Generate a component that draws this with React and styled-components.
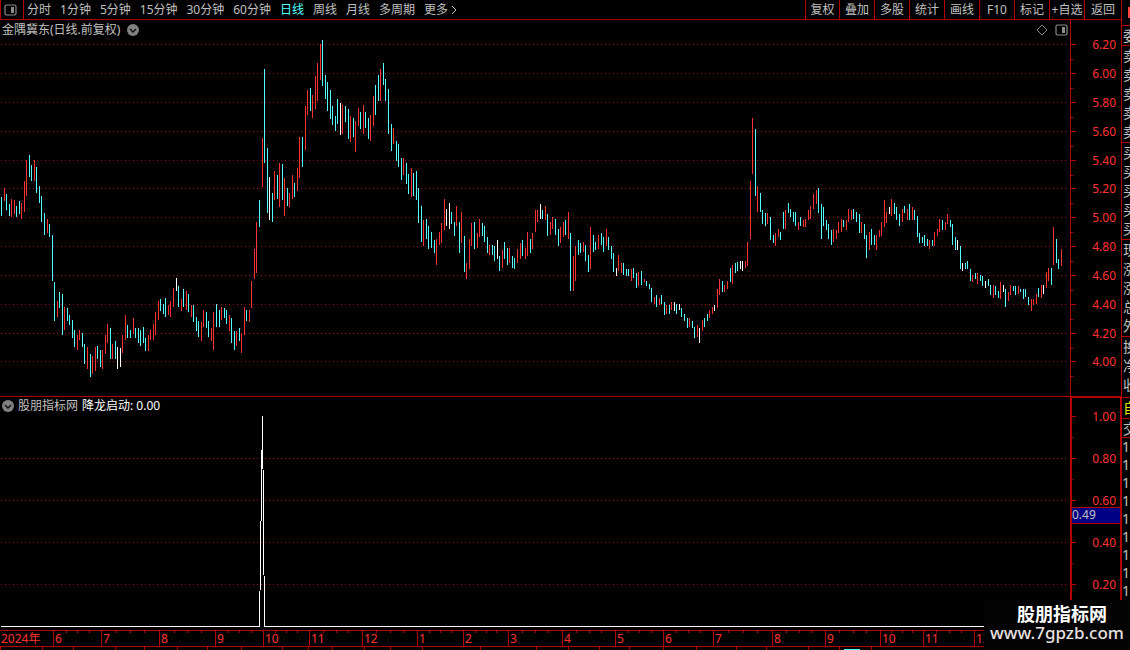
import React, { useState } from "react";
import styled, { createGlobalStyle } from "styled-components";

const periods = [
  "分时",
  "1分钟",
  "5分钟",
  "15分钟",
  "30分钟",
  "60分钟",
  "日线",
  "周线",
  "月线",
  "多周期",
];

const tools = ["复权", "叠加", "多股", "统计", "画线", "F10", "标记", "+自选", "返回"];

// x, high, low for every day, grouped by colour: r = up, c = down, w = flat
const bars = `
c1,197,216 r4,188,201 c6,194,210 c9,204,216 r11,199,217 r14,200,214 c16,206,217 c19,201,214 r21,203,219
r24,181,212 r26,160,196 c29,155,177 c31,165,181 r34,160,181 c36,167,193 c39,186,203 c41,196,222 c44,213,235
r47,219,233 c49,224,237 c52,235,281 c54,282,321 r57,301,317 c59,292,308 c62,294,335 r64,307,330 c67,308,321
c69,315,325 c72,320,338 c74,330,347 r77,335,350 r79,330,340 c82,333,347 c84,344,364 r87,347,369 c90,354,377
r92,356,374 r95,347,371 c97,346,359 c100,350,367 r102,350,369 r105,335,354 r107,324,343 c110,328,359
r112,344,359 c115,341,359 w117,347,369 w120,348,367 r122,335,353 r125,315,340 c127,325,338 c130,330,338
r133,318,334 c135,328,338 c138,328,343 c140,330,346 c143,327,343 c145,338,351 r148,335,351 r150,330,340
r153,324,340 r155,312,335 r158,301,320 c160,299,311 c163,304,314 c165,298,317 r168,305,315 r170,301,317
r173,288,307 w176,278,291 c178,286,307 r181,299,311 c183,289,307 r186,291,310 c188,294,312 r191,305,317
c193,305,322 c196,317,331 c198,321,337 r201,322,341 r203,310,327 c206,312,328 c208,321,337 r211,328,341
r213,312,350 c216,304,327 c219,310,327 r221,307,320 c224,308,318 c226,310,324 r229,315,331 c231,318,343
c234,331,350 r236,331,346 c239,328,341 r241,333,353 r244,307,335 c246,310,321 r249,310,322 r251,281,308
r254,249,279 r256,222,273 c259,200,227 r262,138,187 c264,69,163 c267,148,213 w269,177,220 c272,193,222
r274,171,200 c277,175,199 r279,163,207 c282,164,200 r284,178,216 c287,188,206 r289,193,207 r292,175,199
c294,183,197 r297,168,191 r299,137,178 c302,137,167 r305,106,150 r307,90,115 c310,88,111 r312,95,118
r315,76,109 r317,63,101 r320,44,80 c322,40,86 c325,75,99 c327,82,111 c330,90,119 c332,106,125 c335,116,131
c337,99,124 w340,103,135 r342,105,134 c345,106,122 c348,109,139 r350,116,142 c353,118,137 r355,121,152
r358,108,126 c360,112,129 r363,105,134 c365,112,128 c368,118,139 r370,115,141 r373,96,126 c375,85,115
c378,75,101 r380,69,101 c383,63,85 c385,79,101 c388,89,134 c391,124,151 r393,128,144 c396,141,161
c398,144,167 c401,158,180 r403,158,175 c406,163,184 c408,174,194 r411,168,197 c413,173,196 c416,171,200
c418,188,223 c421,206,242 r423,220,246 c426,219,239 c428,226,249 c431,232,248 c434,240,253 r436,239,265
r439,232,245 r441,223,243 r444,199,230 w446,209,226 w449,203,229 c451,212,224 c454,222,236 r456,206,226
c459,222,253 r461,212,243 c464,236,272 r466,263,279 r469,239,269 r471,223,246 c474,222,249 r477,233,248
r479,219,237 c482,223,236 c484,226,242 c487,237,253 r489,245,255 c492,245,255 c494,246,261 w497,240,259
c499,256,271 r502,250,268 c504,242,259 c507,248,265 r509,248,263 c512,256,268 c514,258,269 r517,249,263
r520,243,259 c522,240,256 r525,248,259 r527,232,256 c530,239,253 r532,233,249 r535,210,232 r537,210,222
w540,204,219 c542,210,219 r545,206,220 c547,214,236 r550,222,235 r552,217,229 c555,219,235 c558,229,246
r560,227,243 r563,222,237 c565,220,235 r568,212,239 c570,233,291 r573,256,291 r575,246,281 c578,240,255
c580,243,253 r583,242,252 c585,245,261 c588,255,272 r590,227,269 c593,235,252 c595,242,250 r598,235,249
c601,233,245 c603,237,252 r606,229,246 c608,237,250 c611,246,259 c613,253,272 w616,268,276 r618,255,271
r621,263,273 c623,263,275 c626,269,276 c628,269,276 r631,269,281 c633,268,278 c636,273,288 r638,272,286
c641,271,285 r644,279,282 c646,281,286 c649,284,289 c651,288,302 r654,297,304 c656,295,307 r659,298,305
c661,295,304 c664,302,315 r666,305,314 c669,305,314 r671,302,310 w674,302,311 c676,304,314 w679,304,310
c681,308,317 c684,314,321 c687,318,328 r689,318,327 c692,321,328 c694,327,338 r697,325,337 w699,328,343
r702,320,331 c704,318,327 c707,314,321 r709,310,318 r712,307,314 w714,305,311 r717,289,308 r719,279,295
c722,281,292 r724,285,292 r727,281,289 c730,268,282 r732,265,284 c735,263,273 c737,262,271 w740,261,269
w742,261,271 r745,261,268 r747,242,266 r750,181,239 r752,118,174 c755,129,196 r757,186,212 c760,193,212
c762,210,224 c765,213,226 r767,213,224 c770,217,240 c773,235,243 r775,233,246 r778,229,237 c780,232,240
c783,212,229 r785,210,229 c788,203,213 c790,209,217 c793,212,222 c795,212,226 r798,222,230 c800,217,226
r803,220,227 r805,219,227 r808,210,220 r810,206,219 r813,194,209 r816,190,204 c818,188,213 c821,204,239
c823,207,226 c826,220,230 c828,224,239 c831,230,245 r833,229,242 r836,230,239 r838,222,233 r841,219,232
c843,220,227 r846,220,230 r848,209,222 r851,210,220 c853,209,219 c856,212,222 c859,214,233 r861,222,233
c864,224,239 c866,235,258 r869,232,250 c871,229,245 c874,235,245 r876,235,250 r879,230,237 r881,222,236
r884,200,227 r886,212,223 w889,207,214 r891,199,216 c894,203,214 c896,207,220 c899,214,226 r902,209,222
c904,206,213 r907,209,220 c909,204,220 r912,207,220 c914,210,220 c917,216,237 c919,233,243 c922,237,243
c924,235,246 c927,239,246 r929,240,249 c932,240,246 r934,232,246 r937,229,236 r939,219,232 c942,220,230
r945,222,230 r947,214,224 c950,220,227 c952,224,245 c955,237,250 w957,240,250 c960,246,269 w962,263,271
c965,263,269 c967,261,269 c970,269,281 r972,275,282 c975,273,279 r977,273,284 c980,275,281 c982,276,286
w985,281,288 c988,279,286 c990,285,295 r993,285,298 c995,286,295 c998,291,298 r1000,282,299 w1003,285,292
c1005,289,307 r1008,292,301 r1010,285,295 c1013,286,291 c1015,286,295 r1018,286,294 c1020,289,292
c1023,289,299 c1025,289,297 c1028,297,305 r1031,299,311 r1033,299,305 r1036,294,304 c1038,288,297
r1041,285,298 w1043,285,294 r1046,272,288 r1048,268,281 c1051,268,285 r1053,227,265 c1056,239,263
c1058,259,269 r1061,249,266`;

const barPath = (kind) =>
  bars
    .trim()
    .split(/\s+/)
    .filter((bar) => bar[0] === kind)
    .map((bar) => {
      const [x, top, bottom] = bar.slice(1).split(",").map(Number);
      return `M${x + 0.5} ${top}V${bottom}`;
    })
    .join("");

const priceScale = [
  ["6.20", 44],
  ["6.00", 73],
  ["5.80", 102],
  ["5.60", 131],
  ["5.40", 160],
  ["5.20", 188],
  ["5.00", 217],
  ["4.80", 246],
  ["4.60", 275],
  ["4.40", 304],
  ["4.20", 333],
  ["4.00", 361],
];

const signalScale = [
  ["1.00", 416],
  ["0.80", 458],
  ["0.60", 500],
  ["0.40", 542],
  ["0.20", 584],
];

// label and the share of the time line that it takes
const months = [
  ["2024年", 53],
  ["6", 48],
  ["7", 58],
  ["8", 56],
  ["9", 48],
  ["10", 46],
  ["11", 53],
  ["12", 55],
  ["1", 46],
  ["2", 45],
  ["3", 54],
  ["4", 53],
  ["5", 48],
  ["6", 50],
  ["7", 59],
  ["8", 53],
  ["9", 55],
  ["10", 43],
  ["11", 51],
  ["12", 156],
];

const tabs = [
  42, 31, 42, 29, 33, 30, 34, 41, 26, 24, 32, 26, 32, 58, 56, 32, 31, 30, 34, 33, 40, 30, 42, 31,
  32, 259,
];

const quoteGroups = [
  { rows: ["委"], height: 20 },
  { rows: ["卖", "卖", "卖", "卖", "卖"], height: 97 },
  { rows: ["买", "买", "买", "买", "买"], height: 97 },
  { rows: ["现", "涨", "涨", "总", "外"], height: 97 },
  { rows: ["换", "净", "收"], height: 61 },
  { rows: ["自"], height: 21, active: true },
  { rows: ["交"], height: 19 },
];

const PanelIcon = () => (
  <svg width="13" height="12" viewBox="0 0 13 12" aria-hidden="true">
    <rect x="1" y="1" width="11" height="10" rx="1.5" fill="none" stroke="#8c8c8c" strokeWidth="1.2" />
    <rect x="7" y="3" width="3" height="6" fill="#8c8c8c" />
  </svg>
);

const DownIcon = () => (
  <svg width="12" height="12" viewBox="0 0 12 12" aria-hidden="true">
    <circle cx="6" cy="6" r="6" fill="#808080" />
    <path d="M3 5L6 8L9 5" fill="none" stroke="#101010" strokeWidth="1.4" />
  </svg>
);

const Scale = ({ marks, left, top, width, height, step, children }) => (
  <ScaleSvg width={width} height={height} viewBox={`${left} ${top} ${width} ${height}`}>
    {marks.map(([label, y]) => (
      <g key={label}>
        <path
          d={`M1 ${y + 0.5}h5M1 ${y + step + 0.5}h2`}
          stroke="#b40000"
          shapeRendering="crispEdges"
        />
        <text x="46" y={y + 5} textAnchor="end">
          {label}
        </text>
      </g>
    ))}
    {children}
  </ScaleSvg>
);

const Grid = ({ marks }) => (
  <path
    d={marks.map(([, y]) => `M1 ${y + 0.5}H1068`).join("")}
    stroke="#a00c0c"
    strokeDasharray="1 3"
    fill="none"
  />
);

const App = () => {
  const [period, setPeriod] = useState("日线");

  return (
    <Screen>
      <GlobalStyle />
      <Top>
        <Main>
          <Toolbar>
            <PanelButton aria-label="面板">
              <PanelIcon />
            </PanelButton>
            <Periods>
              {periods.map((name) => (
                <Period key={name} $active={name === period} onClick={() => setPeriod(name)}>
                  {name}
                </Period>
              ))}
              <Period>
                更多
                <svg width="10" height="10" viewBox="0 0 10 10" aria-hidden="true">
                  <path d="M4 1L8 5L4 9" fill="none" stroke="#c0c0c0" />
                </svg>
              </Period>
            </Periods>
            <Tools>
              {tools.map((name) => (
                <Tool key={name}>{name}</Tool>
              ))}
            </Tools>
          </Toolbar>

          <Pane>
            <Plot>
              <PlotHead>
                <PlotTitle>金隅冀东(日线.前复权)</PlotTitle>
                <IconButton aria-label="展开">
                  <DownIcon />
                </IconButton>
                <HeadIcons>
                  <IconButton aria-label="标记">
                    <svg width="12" height="12" viewBox="0 0 12 12" aria-hidden="true">
                      <path d="M6 1L11 6L6 11L1 6Z" fill="none" stroke="#808080" />
                    </svg>
                  </IconButton>
                  <IconButton aria-label="侧栏">
                    <PanelIcon />
                  </IconButton>
                </HeadIcons>
              </PlotHead>
              <PlotSvg height="356" viewBox="0 40 1070 356" preserveAspectRatio="none">
                <Grid marks={priceScale} />
                <path d={barPath("r")} stroke="#ff3232" />
                <path d={barPath("c")} stroke="#54ffff" />
                <path d={barPath("w")} stroke="#ffffff" />
              </PlotSvg>
            </Plot>
            <Axis>
              <Scale marks={priceScale} left={1} top={20} width={50} height={376} step={15} />
            </Axis>
          </Pane>

          <Pane>
            <Plot $line>
              <PlotHead $low>
                <IconButton aria-label="展开">
                  <DownIcon />
                </IconButton>
                <PlotTitle>股朋指标网</PlotTitle>
                <Signal>降龙启动: 0.00</Signal>
              </PlotHead>
              <PlotSvg height="216" viewBox="0 414 1070 216" preserveAspectRatio="none">
                <Grid marks={signalScale.slice(1)} />
                <path d="M1 626.5H259.5L262.5 416L264.5 626.5H1070" stroke="#ffffff" fill="none" />
              </PlotSvg>
            </Plot>
            <Axis $framed>
              <Scale marks={signalScale} left={2} top={398} width={48} height={232} step={21}>
                <rect x="2" y="507" width="48" height="17" fill="#b40000" />
                <rect x="2" y="508" width="48" height="15" fill="#000084" />
                <CursorText x="2" y="519">
                  0.49
                </CursorText>
              </Scale>
            </Axis>
          </Pane>
        </Main>

        <Quotes>
          <Alert />
          {quoteGroups.map((group, i) => (
            <QuoteGroup key={i} $height={group.height} $active={group.active}>
              {group.rows.map((row, j) => (
                <QuoteRow key={j}>{row}</QuoteRow>
              ))}
            </QuoteGroup>
          ))}
          {Array(9)
            .fill()
            .map((_, i) => (
              <Trade key={i}>1</Trade>
            ))}
        </Quotes>
      </Top>

      <Months>
        {months.map(([label], i) => (
          <Month key={i}>{label}</Month>
        ))}
      </Months>
      <Tabs>
        {tabs.map((_, i) => (
          <Tab key={i} $active={i === 24} />
        ))}
      </Tabs>

      <Watermark>
        <Brand>股朋指标网</Brand>
        <Site>www.7gpzb.com</Site>
      </Watermark>
    </Screen>
  );
};

const GlobalStyle = createGlobalStyle`
  * {
    box-sizing: border-box;
  }
  body {
    margin: 0;
    background: #000000;
    color: #c0c0c0;
    font-family: "Noto Sans", "Noto Sans CJK SC", sans-serif;
    font-size: 12px;
    line-height: 18px;
  }
  button {
    background: none;
    border: none;
    padding: 0;
    color: inherit;
    font: inherit;
    cursor: pointer;
  }
  svg {
    display: block;
  }
`;

const Screen = styled.div`
  position: relative;
  min-height: 100vh;
  overflow: hidden;
`;

const Top = styled.div`
  display: flex;
  height: 630px;
`;

const Main = styled.main`
  flex: 1;
  min-width: 0;
`;

const Toolbar = styled.nav`
  display: flex;
  height: 20px;
  border-left: 1px solid #b40000;
  border-bottom: 1px solid #b40000;
  white-space: nowrap;
  overflow: hidden;
`;

const PanelButton = styled.button`
  width: 23px;
  padding-left: 3px;
  border-right: 1px solid #b40000;
`;

const Periods = styled.div`
  display: flex;
  gap: 9px;
  flex: 1;
  padding-left: 3px;
`;

const Period = styled.button`
  display: flex;
  align-items: center;
  color: ${(props) => (props.$active ? "#54ffff" : "#c0c0c0")};
  &:hover {
    color: #ffffff;
  }
`;

const Tools = styled.div`
  display: flex;
`;

const Tool = styled.button`
  width: 35px;
  border-left: 1px solid #b40000;
  &:first-child {
    width: 34px;
  }
  &:last-child {
    width: 37px;
  }
  &:hover {
    color: #ffffff;
  }
`;

const Pane = styled.section`
  display: flex;
`;

const Plot = styled.div`
  flex: 1;
  min-width: 0;
  border-top: ${(props) => (props.$line ? "1px solid #b40000" : "none")};
`;

const PlotHead = styled.header`
  display: flex;
  align-items: center;
  gap: ${(props) => (props.$low ? "4px" : "7px")};
  height: ${(props) => (props.$low ? "17px" : "20px")};
  padding: 0 2px;
`;

const PlotTitle = styled.h1`
  margin: 0;
  font-size: 12px;
  font-weight: 400;
`;

const IconButton = styled.button`
  display: flex;
`;

const HeadIcons = styled.div`
  display: flex;
  align-items: center;
  gap: 7px;
  margin-left: auto;
`;

const Signal = styled.span`
  color: #ffffff;
`;

const PlotSvg = styled.svg`
  width: 100%;
  shape-rendering: crispEdges;
`;

const Axis = styled.div`
  width: 51px;
  border-left: 1px solid #b40000;
  ${(props) =>
    props.$framed &&
    `
    border-width: 2px 1px 0 2px;
    border-style: solid;
    border-color: #b40000;
  `}
`;

const ScaleSvg = styled.svg`
  font-size: 12px;
  fill: #ff3232;
`;

const CursorText = styled.text`
  fill: #c0c0c0;
`;

const Quotes = styled.aside`
  width: 9px;
  border-left: 1px solid #b40000;
  overflow: hidden;
  white-space: nowrap;
`;

const Alert = styled.div`
  height: 26px;
  border-bottom: 1px solid #b40000;
  background: linear-gradient(#ff4444, #ff4444) 6px 7px / 2px 11px no-repeat;
`;

const QuoteGroup = styled.div`
  height: ${(props) => props.$height}px;
  padding-left: 1px;
  border-bottom: 1px solid #b40000;
  color: ${(props) => (props.$active ? "#e0e000" : "#c0c0c0")};
`;

const QuoteRow = styled.div`
  font-size: 14px;
  line-height: 19px;
`;

const Trade = styled.div`
  font-size: 14px;
`;

const Months = styled.div`
  display: grid;
  grid-template-columns: ${months.map(([, span]) => `minmax(0, ${span}fr)`).join(" ")};
  height: 17px;
  border-top: 1px solid #b40000;
  border-bottom: 1px solid #b40000;
  color: #ff3232;
  line-height: 16px;
`;

const tick = "linear-gradient(#b40000, #b40000)";

const Month = styled.div`
  padding-left: 1px;
  white-space: nowrap;
  &:not(:first-child) {
    border-left: 1px solid #b40000;
    background: ${tick} 25% 0 / 1px 2px no-repeat, ${tick} 50% 0 / 1px 2px no-repeat,
      ${tick} 75% 0 / 1px 2px no-repeat;
  }
`;

const Tabs = styled.div`
  display: grid;
  grid-template-columns: ${tabs.map((span) => `minmax(0, ${span}fr)`).join(" ")};
  height: 3px;
`;

const Tab = styled.div`
  border-left: 1px solid #b40000;
  background: ${(props) =>
    props.$active ? "linear-gradient(#54ffff, #54ffff) 4px 2px / 16px 1px no-repeat" : "none"};
`;

const Watermark = styled.div`
  position: absolute;
  right: 0;
  bottom: 0;
  width: 146px;
  height: 50px;
  padding-top: 4px;
  background: #030303;
  color: #ffffff;
  text-align: center;
`;

const Brand = styled.div`
  padding-left: 10px;
  font-size: 18px;
  font-weight: 700;
  line-height: 20px;
`;

const Site = styled.div`
  font-size: 17px;
  font-weight: 500;
  line-height: 18px;
  color: #e8e0e0;
`;

export default App;
